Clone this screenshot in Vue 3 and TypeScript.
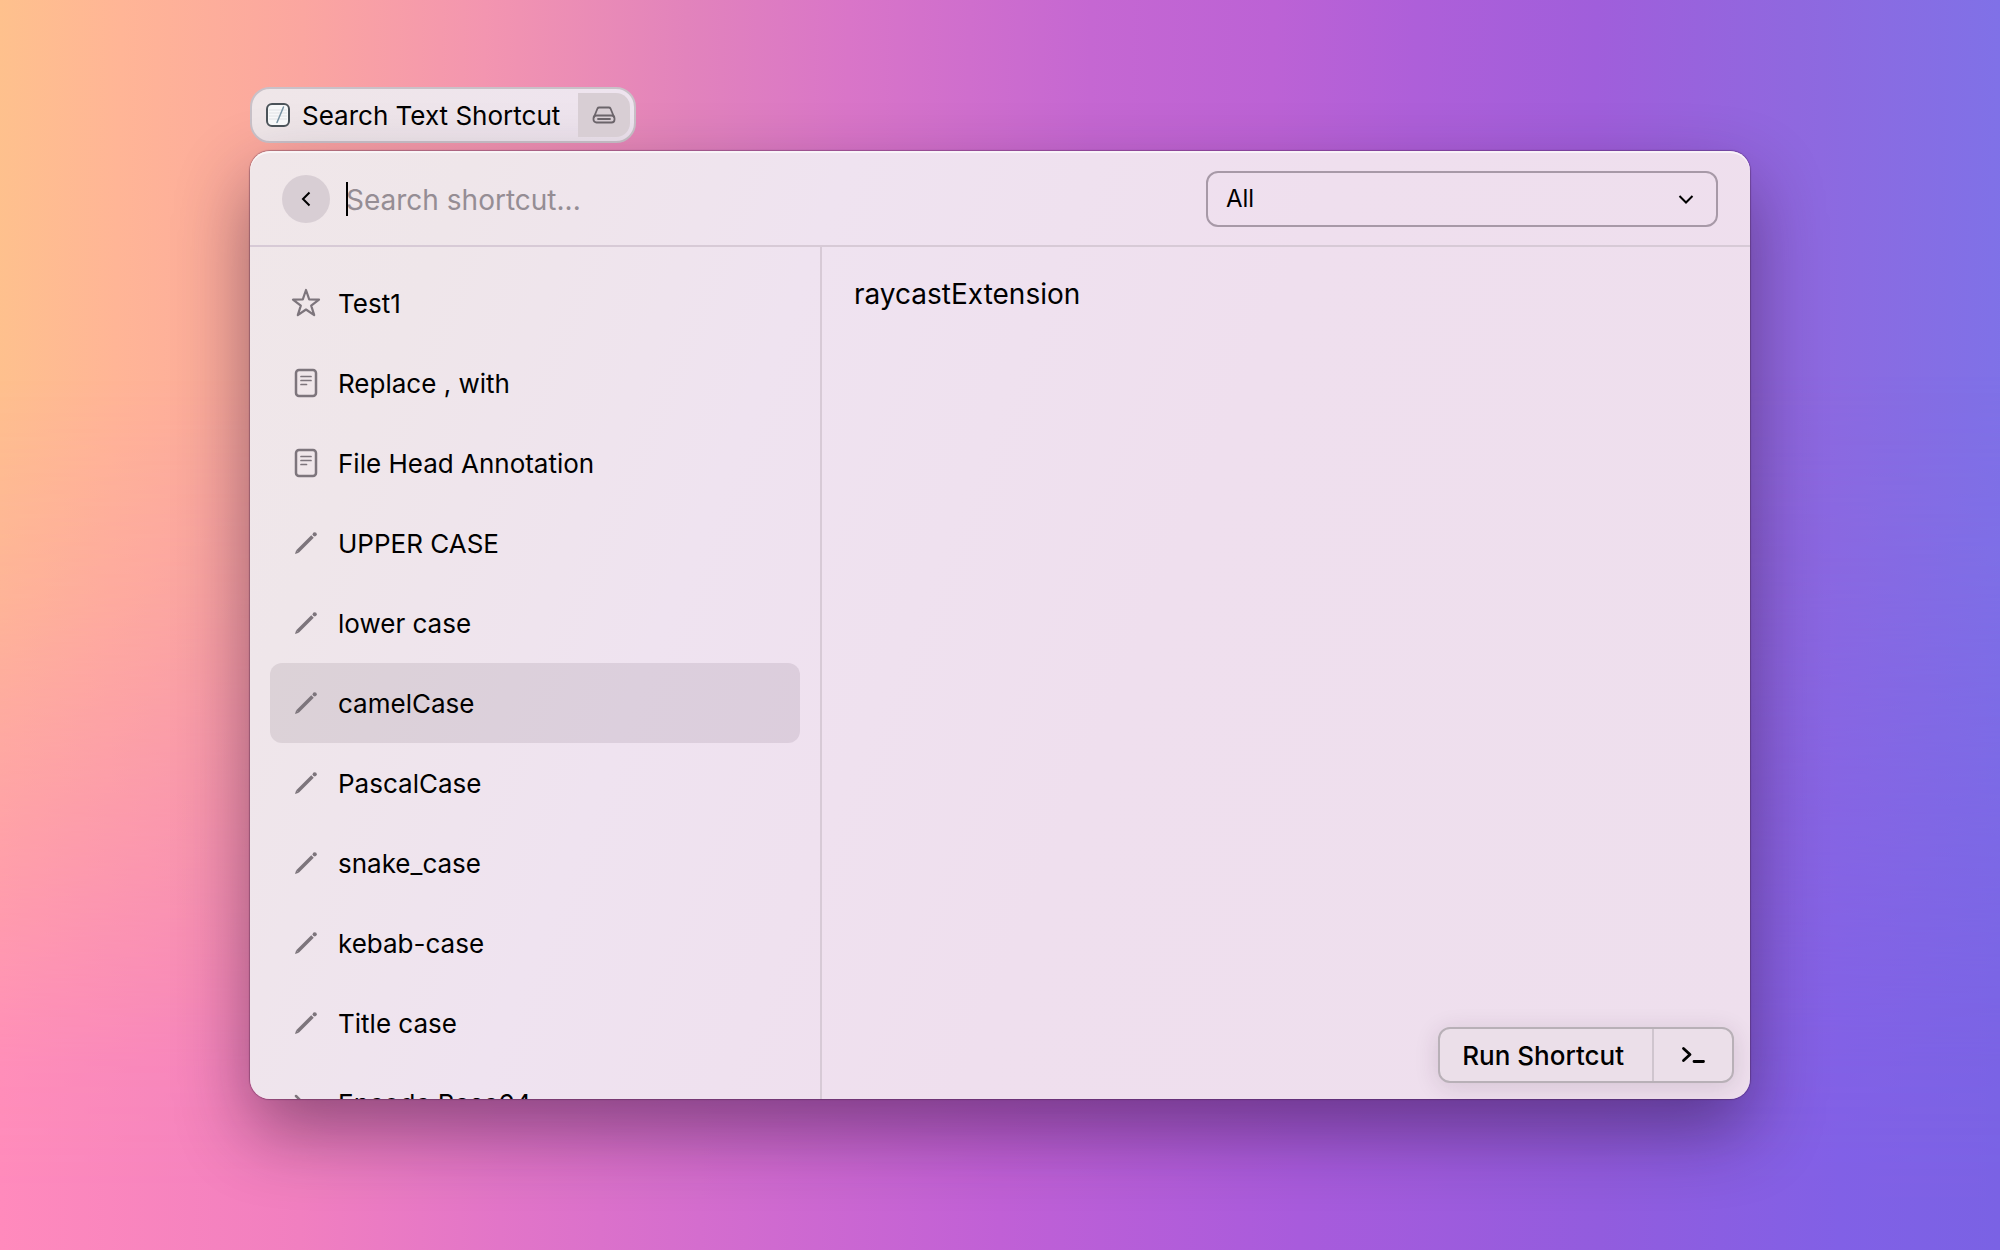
<script setup lang="ts">
import { ref } from 'vue'

type IconName = 'star' | 'document' | 'pencil' | 'terminal'

interface Shortcut {
  title: string
  icon: IconName
}

const shortcuts: Shortcut[] = [
  { title: 'Test1', icon: 'star' },
  { title: 'Replace , with', icon: 'document' },
  { title: 'File Head Annotation', icon: 'document' },
  { title: 'UPPER CASE', icon: 'pencil' },
  { title: 'lower case', icon: 'pencil' },
  { title: 'camelCase', icon: 'pencil' },
  { title: 'PascalCase', icon: 'pencil' },
  { title: 'snake_case', icon: 'pencil' },
  { title: 'kebab-case', icon: 'pencil' },
  { title: 'Title case', icon: 'pencil' },
  { title: 'Encode Base64', icon: 'terminal' },
]

const selected = ref(5)
const query = ref('')
const category = ref('All')
</script>

<template>
  <main class="desktop">
    <header class="badge">
      <svg class="badge-logo" viewBox="0 0 24 24" aria-hidden="true">
        <rect x="1" y="1" width="22" height="22" rx="5" fill="#f7f8f9" stroke="#4b5359" stroke-width="2" />
        <path d="M3 7h18M3 10h18M3 13h18M3 16h18" stroke="#e0e2e5" stroke-width="1" />
        <path d="M17.500 4L11 19.500" stroke="#7893a3" stroke-width="1.500" stroke-linecap="round" />
      </svg>
      <h1 class="badge-title">Search Text Shortcut</h1>
      <span class="badge-drive">
        <svg class="drive" viewBox="0 0 24 24" aria-hidden="true" fill="none" stroke="#6b646a" stroke-width="1.800" stroke-linejoin="round" stroke-linecap="round">
          <path d="M2 14L5.500 5.500Q6 4.500 7.200 4.500H16.800Q18 4.500 18.500 5.500L22 14" />
          <rect x="1.500" y="12.500" width="21" height="7" rx="3" />
          <path d="M6 16H18" />
        </svg>
      </span>
    </header>

    <section class="window">
      <div class="toolbar">
        <button class="back" type="button" aria-label="Back">
          <svg width="24" height="24" viewBox="0 0 24 24" aria-hidden="true" fill="none" stroke="#000" stroke-width="2">
            <path d="M15.500 5.500L9 12L15.500 18.500" />
          </svg>
        </button>
        <div class="field">
          <input v-model="query" class="search" type="text" placeholder="Search shortcut..." aria-label="Search shortcut" />
          <span v-if="!query" class="caret" aria-hidden="true"></span>
        </div>
        <div class="picker">
          <select v-model="category" class="picker-select" aria-label="Category">
            <option>All</option>
          </select>
          <svg class="picker-arrow" width="24" height="24" viewBox="0 0 24 24" aria-hidden="true" fill="none" stroke="#000" stroke-width="2">
            <path d="M5.500 9L12 15.500L18.500 9" />
          </svg>
        </div>
      </div>

      <div class="content">
        <nav class="sidebar" aria-label="Shortcuts">
          <ul class="list">
            <li v-for="(item, i) in shortcuts" :key="item.title">
              <button type="button" class="row" :class="{ active: i === selected }" @click="selected = i">
                <svg class="row-icon" viewBox="0 0 32 32" aria-hidden="true" fill="none" stroke="currentColor" stroke-width="2.500">
                  <path v-if="item.icon === 'star'" stroke-width="2.200" stroke-linejoin="round" d="M16 3L19.200 12.400L29 12.600L21.200 18.700L24.200 28.200L16 22.500L7.800 28.200L10.800 18.700L3 12.600L12.800 12.400Z" />
                  <template v-else-if="item.icon === 'document'">
                    <rect x="6" y="3" width="20" height="26" rx="3" />
                    <path d="M11 9.500H21M11 13.500H21M11 17.500H16.500" stroke-width="1.700" stroke-linecap="round" />
                  </template>
                  <template v-else-if="item.icon === 'pencil'">
                    <path d="M7.500 24.500L22.500 9.500" stroke-width="3.600" />
                    <path d="M5 27L6.200 23.200L8.800 25.800Z" fill="currentColor" stroke="none" />
                    <circle cx="24.700" cy="7.300" r="2.100" fill="currentColor" stroke="none" />
                  </template>
                  <path v-else d="M6 9L12 15L6 21M15 22H26" stroke-linecap="round" />
                </svg>
                <span class="row-title">{{ item.title }}</span>
              </button>
            </li>
          </ul>
        </nav>

        <article class="detail">
          <p class="preview">raycastExtension</p>
          <div class="actions">
            <button class="run" type="button">Run Shortcut</button>
            <button class="console" type="button" aria-label="Open terminal">
              <svg width="24" height="24" viewBox="0 0 24 24" aria-hidden="true" fill="none" stroke="#000" stroke-width="2.800" stroke-linecap="round" stroke-linejoin="round">
                <path d="M2.500 5.500L9 11.500L2.500 17.500M13 18.500H22.500" />
              </svg>
            </button>
          </div>
        </article>
      </div>
    </section>
  </main>
</template>

<style>
body {
  margin: 0;
}
</style>

<style scoped>
.desktop {
  position: relative;
  isolation: isolate;
  box-sizing: border-box;
  min-height: 100vh;
  padding: 87px 12.5%;
  overflow: hidden;
  font-family: Inter, 'Liberation Sans', sans-serif;
  color: #000;
  background: linear-gradient(91deg, #fec18d 0%, #ffb596 6%, #fba6a0 15%, #f395b0 24%, #e283bc 34%, #d975c8 42%, #c567d2 54%, #bc62d5 63%, #ae5fd9 70%, #a05edb 79%, #8f68df 89%, #7e72e8 100%);
}

.desktop::before {
  content: '';
  position: absolute;
  inset: 0;
  z-index: -1;
  background: linear-gradient(90deg, #ff8abc 0%, #f17fc0 15%, #e275c8 25%, #d46dce 35%, #c060d6 50%, #a85bdc 65%, #925cde 80%, #8160e6 92%, #7a62e4 100%);
  mask-image: linear-gradient(180deg, transparent 30%, rgba(0, 0, 0, 0.22) 48%, rgba(0, 0, 0, 0.62) 70%, rgba(0, 0, 0, 0.92) 85%, #000 96%);
}

.badge {
  display: flex;
  align-items: center;
  box-sizing: border-box;
  width: max-content;
  height: 56px;
  padding: 4px;
  border: 2px solid #c9c1c8;
  border-radius: 20px;
  background: linear-gradient(90deg, #efe6e8, #eee4ef);
}

.badge-logo {
  width: 24px;
  height: 24px;
  margin-left: 10px;
}

.badge-title {
  margin: 0 18px 0 12px;
  padding-top: 2px;
  font-size: 26px;
  font-weight: 400;
  line-height: 32px;
}

.badge-drive {
  display: grid;
  place-items: center;
  width: 52px;
  height: 44px;
  border-radius: 0 14px 14px 0;
  background: #d8ced4;
}

.drive {
  width: 24px;
  height: 24px;
}

.window {
  box-sizing: border-box;
  height: 948px;
  margin-top: 8px;
  display: flex;
  flex-direction: column;
  overflow: hidden;
  border-radius: 20px;
  background: linear-gradient(112deg, #f0e7e9 0%, #efe6ea 12%, #efe3f0 32%, #efdfee 58%, #eedfed 100%);
  box-shadow:
    inset 0 2px 0 rgba(255, 255, 255, 0.6),
    0 0 1px 1px rgba(60, 20, 60, 0.35),
    0 32px 72px rgba(30, 10, 40, 0.45);
}

.toolbar {
  display: flex;
  align-items: center;
  box-sizing: border-box;
  flex: none;
  height: 96px;
  padding: 2px 32px 0;
  border-bottom: 2px solid #d7cad6;
}

.back {
  display: grid;
  place-items: center;
  width: 48px;
  height: 48px;
  padding: 0;
  border: 0;
  border-radius: 50%;
  background: #d8ced4;
}

.field {
  position: relative;
  display: flex;
  align-items: center;
  flex: 1;
  min-width: 0;
  margin-left: 16px;
}

.search {
  box-sizing: border-box;
  width: 100%;
  height: 48px;
  padding: 2px 0 0;
  border: 0;
  outline: 0;
  background: none;
  font: 400 28px/34px Inter, 'Liberation Sans', sans-serif;
  color: #000;
}

.search::placeholder {
  color: #958d94;
  opacity: 1;
}

.caret {
  position: absolute;
  left: 0;
  width: 2px;
  height: 34px;
  background: #000;
}

.search:focus + .caret {
  display: none;
}

.picker {
  display: grid;
  align-items: center;
  width: 512px;
}

.picker-select {
  grid-area: 1 / 1;
  appearance: none;
  height: 56px;
  padding: 0 18px;
  border: 2px solid #a799a7;
  border-radius: 12px;
  background: none;
  font: 400 24px/30px Inter, 'Liberation Sans', sans-serif;
  color: #000;
}

.picker-arrow {
  grid-area: 1 / 1;
  justify-self: end;
  margin-right: 20px;
  pointer-events: none;
}

.content {
  display: flex;
  flex: 1;
  min-height: 0;
}

.sidebar {
  box-sizing: border-box;
  flex: 0 0 572px;
  padding: 16px 20px 0;
  overflow: hidden;
  border-right: 2px solid #d7cad6;
}

.list {
  margin: 0;
  padding: 0;
  list-style: none;
}

.row {
  display: flex;
  align-items: center;
  gap: 16px;
  width: 100%;
  height: 80px;
  padding: 0 20px;
  border: 0;
  border-radius: 12px;
  background: none;
  font: 400 26px/32px Inter, 'Liberation Sans', sans-serif;
  color: #000;
  text-align: left;
}

.row.active {
  background: rgba(30, 10, 30, 0.09);
}

.row-icon {
  width: 32px;
  height: 32px;
  color: #7d757c;
}

.row-title {
  padding-top: 2px;
}

.detail {
  display: flex;
  flex-direction: column;
  justify-content: space-between;
  flex: 1;
  min-width: 0;
  padding: 30px 16px 16px 32px;
}

.preview {
  margin: 0;
  font-size: 28px;
  line-height: 34px;
}

.actions {
  display: flex;
  align-self: flex-end;
  box-sizing: border-box;
  height: 56px;
  border: 2px solid #b8b0b7;
  border-radius: 12px;
  background: #ebdfe9;
  box-shadow: 0 4px 24px rgba(60, 30, 60, 0.14);
}

.run,
.console {
  display: grid;
  place-items: center;
  border: 0;
  background: none;
  font: 500 26px/32px Inter, 'Liberation Sans', sans-serif;
  color: #000;
}

.run {
  padding: 2px 28px 0 22px;
}

.console {
  width: 80px;
  padding: 0;
  border-left: 2px solid #cfc5ce;
}
</style>
